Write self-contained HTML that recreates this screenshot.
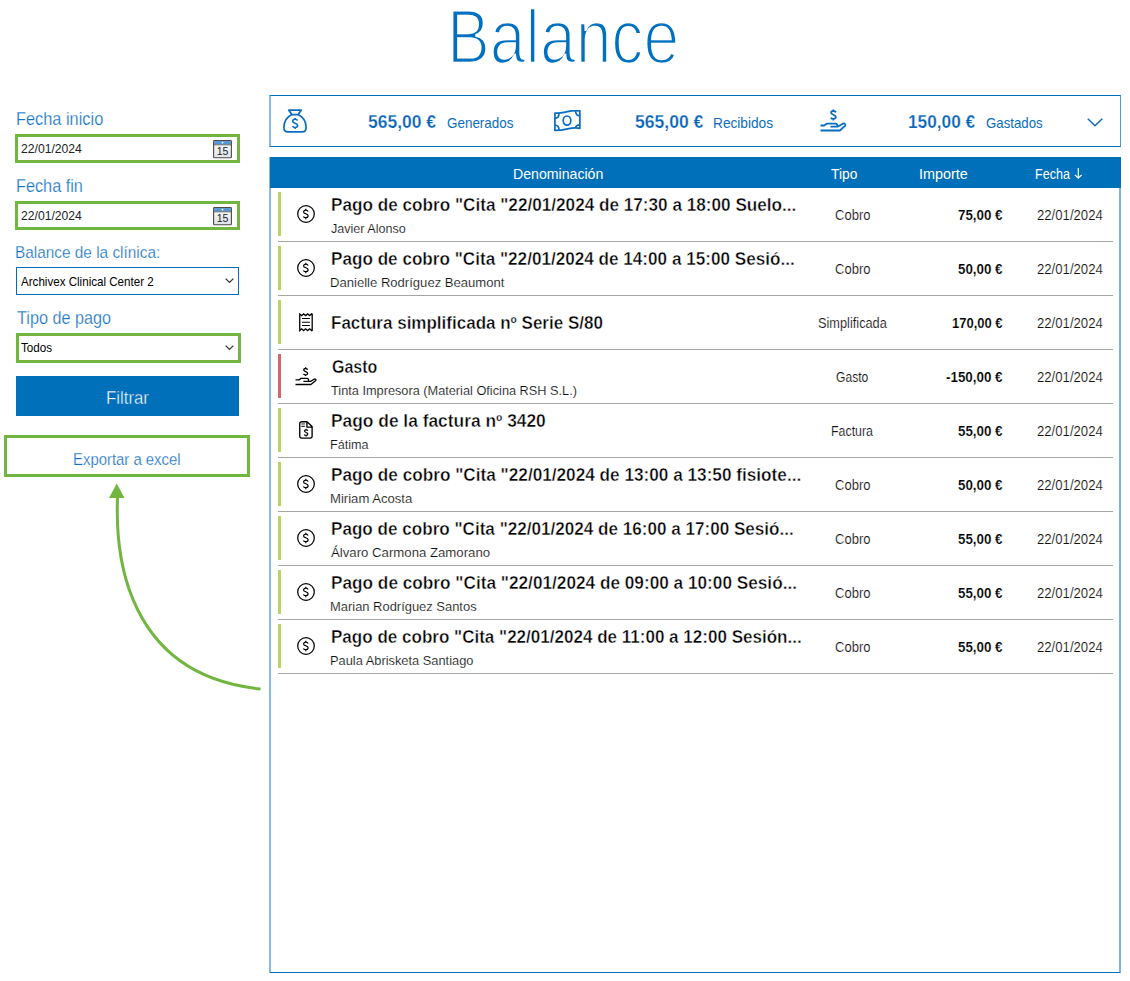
<!DOCTYPE html>
<html><head><meta charset="utf-8"><style>
html,body{margin:0;padding:0;background:#fff;}
body{width:1130px;height:981px;position:relative;overflow:hidden;font-family:"Liberation Sans",sans-serif;}
.t{position:absolute;white-space:pre;transform-origin:0 0;}
.a{position:absolute;}
</style></head><body>
<!-- left panel boxes -->
<div class="a" style="left:15px;top:133.5px;width:218.5px;height:23px;border:3px solid #72B640;"></div>
<svg class="a" style="left:213px;top:140px" width="19" height="19" viewBox="0 0 19 19">
<defs><linearGradient id="cg140" x1="0" y1="0" x2="0" y2="1"><stop offset="0" stop-color="#fbfbfc"/><stop offset="1" stop-color="#dfe3e8"/></linearGradient></defs>
<rect x="0.6" y="0.6" width="17.8" height="17.2" rx="0.8" fill="url(#cg140)" stroke="#4a4a4a" stroke-width="1.1"/>
<rect x="1.1" y="1.1" width="16.8" height="3.2" fill="#5596D2"/>
<line x1="1" y1="4.8" x2="18" y2="4.8" stroke="#555" stroke-width="0.9"/>
<circle cx="9.5" cy="2.6" r="0.9" fill="#fff"/>
<text x="9.6" y="15.3" font-family="Liberation Sans" font-size="10.5" text-anchor="middle" fill="#222">15</text>
</svg>
<div class="a" style="left:15px;top:201px;width:218.5px;height:23.3px;border:3px solid #72B640;"></div>
<svg class="a" style="left:213px;top:206.5px" width="19" height="19" viewBox="0 0 19 19">
<defs><linearGradient id="cg206" x1="0" y1="0" x2="0" y2="1"><stop offset="0" stop-color="#fbfbfc"/><stop offset="1" stop-color="#dfe3e8"/></linearGradient></defs>
<rect x="0.6" y="0.6" width="17.8" height="17.2" rx="0.8" fill="url(#cg206)" stroke="#4a4a4a" stroke-width="1.1"/>
<rect x="1.1" y="1.1" width="16.8" height="3.2" fill="#5596D2"/>
<line x1="1" y1="4.8" x2="18" y2="4.8" stroke="#555" stroke-width="0.9"/>
<circle cx="9.5" cy="2.6" r="0.9" fill="#fff"/>
<text x="9.6" y="15.3" font-family="Liberation Sans" font-size="10.5" text-anchor="middle" fill="#222">15</text>
</svg>
<div class="a" style="left:16px;top:267px;width:220.7px;height:26px;border:1px solid #0070BB;"></div>
<svg class="a" style="left:224.6px;top:278px" width="9" height="5" viewBox="0 0 9 5"><polyline points="0.65,0.65 4.5,4.35 8.35,0.65" fill="none" stroke="#333" stroke-width="1.3"/></svg>
<div class="a" style="left:15.5px;top:333.3px;width:219.1px;height:23.6px;border:3px solid #72B640;"></div>
<svg class="a" style="left:224.6px;top:345px" width="9" height="5" viewBox="0 0 9 5"><polyline points="0.65,0.65 4.5,4.35 8.35,0.65" fill="none" stroke="#333" stroke-width="1.3"/></svg>
<div class="a" style="left:15.5px;top:375.9px;width:223.2px;height:39.8px;background:#0070BB;"></div>
<div class="a" style="left:4.3px;top:434.5px;width:239.4px;height:36.5px;border:3px solid #72B640;"></div>
<svg class="a" style="left:0;top:0" width="300" height="720" viewBox="0 0 300 720">
<path d="M260.5 689 C104 673 117.5 512 117.5 497" fill="none" stroke="#72B640" stroke-width="3"/>
<path d="M109 498 L116.8 483.5 L124.5 498 Z" fill="#72B640"/>
</svg>
<!-- summary -->
<div class="a" style="left:269px;top:95px;width:849px;height:50px;border-top:1px solid #0070BB;border-bottom:1px solid #0070BB;border-left:2px solid #86BCE4;border-right:1px solid #4F9AD6;"></div>
<svg class="a" style="left:283.4px;top:108.9px" width="24" height="24" viewBox="0 0 24 24"><path d="M5.8 1.2 H18.2 L15.2 5.6 H8.8 Z" fill="none" stroke="#0A6DC0" stroke-width="1.7" stroke-linejoin="round"/><path d="M8.8 5.6 C4 8 0.9 13 0.9 18.5 C0.9 21.3 2.3 22.9 4.8 22.9 H19.2 C21.7 22.9 23.1 21.3 23.1 18.5 C23.1 13 20 8 15.2 5.6" fill="none" stroke="#0A6DC0" stroke-width="1.7"/><path d="M14.6 11.5 C14.1 10.7 13.2 10.3 12.1 10.3 C10.7 10.3 9.7 11 9.7 12.2 C9.7 13.4 10.9 13.9 12.1 14.2 C13.4 14.6 14.6 15.1 14.6 16.5 C14.6 17.7 13.6 18.5 12.1 18.5 C10.9 18.5 9.9 18 9.5 17.2 M12.1 9 V10.3 M12.1 18.5 V19.9" fill="none" stroke="#0A6DC0" stroke-width="1.6"/></svg>
<svg class="a" style="left:553.5px;top:110px" width="27" height="21.5" viewBox="0 0 27 21.5"><path d="M0.9 3.2 C5 3.4 9 2.6 13.5 1.6 C18 0.6 21.5 0.3 25.9 0.9 V18.3 C21.5 17.6 18 17.9 13.5 18.9 C9 19.9 5 20.6 0.9 20.4 Z" fill="none" stroke="#0A6DC0" stroke-width="1.7" stroke-linejoin="round"/><ellipse cx="13" cy="10.6" rx="3.8" ry="4.6" fill="none" stroke="#0A6DC0" stroke-width="1.7"/><path d="M0.9 8.3 C3.5 8.3 5 6.3 5 3.2 M25.9 6 C23.4 6 21.6 4 21.6 0.6 M0.9 15 C3.5 15 5 17 5 20.4 M25.9 14.8 C23.4 14.8 21.6 16.3 21.6 17.9" fill="none" stroke="#0A6DC0" stroke-width="1.7"/></svg>
<svg class="a" style="left:820px;top:109px" width="27" height="23" viewBox="0 0 27 23"><path d="M13.3 0.6 V2 M16 3.2 C15.5 2.4 14.6 2 13.4 2 C12 2 11.1 2.7 11.1 3.8 C11.1 5 12.3 5.4 13.4 5.8 C14.7 6.2 15.8 6.6 15.8 8 C15.8 9.1 14.8 9.9 13.3 9.9 C12.2 9.9 11.3 9.4 10.9 8.7 M13.3 9.9 V11.4" fill="none" stroke="#0A6DC0" stroke-width="1.8"/><path d="M0.5 16.5 H4.2 L7 14.6 H15.5 C17 14.6 17.6 15.8 17.2 17.1 M10.4 17.6 H18 L22.8 14.7 C24.7 13.9 26 15.6 25 16.9 L19.9 21.5 H0.5" fill="none" stroke="#0A6DC0" stroke-width="1.8" stroke-linejoin="round"/></svg>
<svg class="a" style="left:1087px;top:118.3px" width="16" height="8.5" viewBox="0 0 16 8.5"><polyline points="0.75,0.75 8.0,7.75 15.25,0.75" fill="none" stroke="#0A6DC0" stroke-width="1.5"/></svg>
<!-- table -->
<div class="a" style="left:269px;top:157px;width:848px;height:815px;border-left:2px solid #86BCE4;border-right:2px solid #7DB5E0;border-bottom:1px solid #0070BB;"></div>
<div class="a" style="left:269.5px;top:157px;width:851px;height:31px;background:#0070BB;"></div>
<svg class="a" style="left:1073px;top:167px" width="11" height="13" viewBox="0 0 11 13"><path d="M5.3 1 V11 M1.9 7.8 L5.3 11.2 L8.7 7.8" fill="none" stroke="#fff" stroke-width="1.2"/></svg>
<div class="a" style="left:278px;top:192px;width:3px;height:44px;background:#B6D65F"></div><div class="a" style="left:278px;top:241px;width:835px;height:1px;background:#A6A6A6"></div><svg class="a" style="left:297px;top:205px" width="18" height="18" viewBox="0 0 18 18"><circle cx="9" cy="9" r="8.3" fill="none" stroke="#000" stroke-width="1.25"/><path d="M11.1 6.4 C10.7 5.6 9.9 5.2 8.8 5.2 C7.5 5.2 6.6 5.9 6.6 6.9 C6.6 8 7.7 8.4 8.8 8.7 C10 9.1 11.1 9.5 11.1 10.8 C11.1 11.9 10.2 12.7 8.8 12.7 C7.7 12.7 6.8 12.2 6.4 11.5 M8.8 3.7 V5.2 M8.8 12.7 V14.3" fill="none" stroke="#000" stroke-width="1.2"/></svg><div class="a" style="left:278px;top:246px;width:3px;height:44px;background:#B6D65F"></div><div class="a" style="left:278px;top:295px;width:835px;height:1px;background:#A6A6A6"></div><svg class="a" style="left:297px;top:259px" width="18" height="18" viewBox="0 0 18 18"><circle cx="9" cy="9" r="8.3" fill="none" stroke="#000" stroke-width="1.25"/><path d="M11.1 6.4 C10.7 5.6 9.9 5.2 8.8 5.2 C7.5 5.2 6.6 5.9 6.6 6.9 C6.6 8 7.7 8.4 8.8 8.7 C10 9.1 11.1 9.5 11.1 10.8 C11.1 11.9 10.2 12.7 8.8 12.7 C7.7 12.7 6.8 12.2 6.4 11.5 M8.8 3.7 V5.2 M8.8 12.7 V14.3" fill="none" stroke="#000" stroke-width="1.2"/></svg><div class="a" style="left:278px;top:300px;width:3px;height:44px;background:#B6D65F"></div><div class="a" style="left:278px;top:349px;width:835px;height:1px;background:#A6A6A6"></div><svg class="a" style="left:299px;top:313px" width="14" height="19" viewBox="0 0 14 19"><path d="M0.75 0.9 L2.65 2.6 L4.65 0.9 L6.65 2.6 L8.65 0.9 L10.65 2.6 L12.65 0.9 L13.2 1.2 V17.3 L12.65 17.6 L10.65 15.8 L8.65 17.6 L6.65 15.8 L4.65 17.6 L2.65 15.8 L0.75 17.6 Z" fill="none" stroke="#000" stroke-width="1.3" stroke-linejoin="miter"/><path d="M3 5.5 H10.8 M3 9.2 H10.8 M3 12.5 H10.8" stroke="#000" stroke-width="1.1"/></svg><div class="a" style="left:278px;top:354px;width:3px;height:44px;background:#D9646C"></div><div class="a" style="left:278px;top:403px;width:835px;height:1px;background:#A6A6A6"></div><svg class="a" style="left:295px;top:367px" width="22" height="19" viewBox="0 0 22 19"><path d="M12.6 2.7 C12.3 1.9 11.6 1.5 10.6 1.5 C9.5 1.5 8.7 2.1 8.7 3.1 C8.7 4.1 9.6 4.4 10.6 4.7 C11.6 5 12.6 5.4 12.6 6.4 C12.6 7.3 11.8 7.9 10.6 7.9 C9.6 7.9 8.9 7.5 8.5 6.9 M10.6 0.2 V1.5 M10.6 7.9 V9.1" fill="none" stroke="#000" stroke-width="1.3"/><path d="M0.5 12.9 H4.1 L5.8 11.4 H12.2 C13.1 11.4 13.6 12.3 13.6 13.9 M8.4 14.4 H15.5 L19.1 12.2 C20.1 11.6 21.5 12.4 20.8 13.4 L15.9 17.5 H0.5" fill="none" stroke="#000" stroke-width="1.3" stroke-linejoin="round"/></svg><div class="a" style="left:278px;top:408px;width:3px;height:44px;background:#B6D65F"></div><div class="a" style="left:278px;top:457px;width:835px;height:1px;background:#A6A6A6"></div><svg class="a" style="left:299px;top:421px" width="14" height="18" viewBox="0 0 14 18"><path d="M8 0.75 H2.6 C1.6 0.75 0.75 1.6 0.75 2.6 V15.3 C0.75 16.3 1.6 17.1 2.6 17.1 H11.2 C12.2 17.1 13.1 16.3 13.1 15.3 V5.6 Z M7.9 0.9 V6.1 H13" fill="none" stroke="#000" stroke-width="1.35" stroke-linejoin="round"/><rect x="2.3" y="2" width="3.6" height="1.8" fill="#888"/><path d="M2.3 5.3 H5.9" stroke="#000" stroke-width="1"/><path d="M8.8 9.6 C8.5 9.1 8 8.8 7.1 8.8 C6.2 8.8 5.5 9.3 5.5 10.1 C5.5 10.9 6.3 11.2 7.1 11.5 C8 11.8 8.8 12.1 8.8 13 C8.8 13.8 8.1 14.3 7.1 14.3 C6.3 14.3 5.6 14 5.3 13.4 M7.1 7.8 V8.8 M7.1 14.3 V15.6" fill="none" stroke="#000" stroke-width="1.2"/></svg><div class="a" style="left:278px;top:462px;width:3px;height:44px;background:#B6D65F"></div><div class="a" style="left:278px;top:511px;width:835px;height:1px;background:#A6A6A6"></div><svg class="a" style="left:297px;top:475px" width="18" height="18" viewBox="0 0 18 18"><circle cx="9" cy="9" r="8.3" fill="none" stroke="#000" stroke-width="1.25"/><path d="M11.1 6.4 C10.7 5.6 9.9 5.2 8.8 5.2 C7.5 5.2 6.6 5.9 6.6 6.9 C6.6 8 7.7 8.4 8.8 8.7 C10 9.1 11.1 9.5 11.1 10.8 C11.1 11.9 10.2 12.7 8.8 12.7 C7.7 12.7 6.8 12.2 6.4 11.5 M8.8 3.7 V5.2 M8.8 12.7 V14.3" fill="none" stroke="#000" stroke-width="1.2"/></svg><div class="a" style="left:278px;top:516px;width:3px;height:44px;background:#B6D65F"></div><div class="a" style="left:278px;top:565px;width:835px;height:1px;background:#A6A6A6"></div><svg class="a" style="left:297px;top:529px" width="18" height="18" viewBox="0 0 18 18"><circle cx="9" cy="9" r="8.3" fill="none" stroke="#000" stroke-width="1.25"/><path d="M11.1 6.4 C10.7 5.6 9.9 5.2 8.8 5.2 C7.5 5.2 6.6 5.9 6.6 6.9 C6.6 8 7.7 8.4 8.8 8.7 C10 9.1 11.1 9.5 11.1 10.8 C11.1 11.9 10.2 12.7 8.8 12.7 C7.7 12.7 6.8 12.2 6.4 11.5 M8.8 3.7 V5.2 M8.8 12.7 V14.3" fill="none" stroke="#000" stroke-width="1.2"/></svg><div class="a" style="left:278px;top:570px;width:3px;height:44px;background:#B6D65F"></div><div class="a" style="left:278px;top:619px;width:835px;height:1px;background:#A6A6A6"></div><svg class="a" style="left:297px;top:583px" width="18" height="18" viewBox="0 0 18 18"><circle cx="9" cy="9" r="8.3" fill="none" stroke="#000" stroke-width="1.25"/><path d="M11.1 6.4 C10.7 5.6 9.9 5.2 8.8 5.2 C7.5 5.2 6.6 5.9 6.6 6.9 C6.6 8 7.7 8.4 8.8 8.7 C10 9.1 11.1 9.5 11.1 10.8 C11.1 11.9 10.2 12.7 8.8 12.7 C7.7 12.7 6.8 12.2 6.4 11.5 M8.8 3.7 V5.2 M8.8 12.7 V14.3" fill="none" stroke="#000" stroke-width="1.2"/></svg><div class="a" style="left:278px;top:624px;width:3px;height:44px;background:#B6D65F"></div><div class="a" style="left:278px;top:673px;width:835px;height:1px;background:#A6A6A6"></div><svg class="a" style="left:297px;top:637px" width="18" height="18" viewBox="0 0 18 18"><circle cx="9" cy="9" r="8.3" fill="none" stroke="#000" stroke-width="1.25"/><path d="M11.1 6.4 C10.7 5.6 9.9 5.2 8.8 5.2 C7.5 5.2 6.6 5.9 6.6 6.9 C6.6 8 7.7 8.4 8.8 8.7 C10 9.1 11.1 9.5 11.1 10.8 C11.1 11.9 10.2 12.7 8.8 12.7 C7.7 12.7 6.8 12.2 6.4 11.5 M8.8 3.7 V5.2 M8.8 12.7 V14.3" fill="none" stroke="#000" stroke-width="1.2"/></svg>
<div class="t" style="left:446.83px;top:-1.00px;font-size:76px;line-height:76px;font-weight:400;color:#0070C0;transform:scaleX(0.8456);-webkit-text-stroke:2.6px #fff;">Balance</div>
<div class="t" style="left:16.02px;top:110.00px;font-size:18.5px;line-height:18.5px;font-weight:400;color:#1272C4;transform:scaleX(0.8837);-webkit-text-stroke:0.25px #fff;">Fecha inicio</div>
<div class="t" style="left:20.70px;top:143.00px;font-size:12.4px;line-height:12.4px;font-weight:400;color:#222;transform:scaleX(0.9819);">22/01/2024</div>
<div class="t" style="left:16.10px;top:177.00px;font-size:18px;line-height:18px;font-weight:400;color:#1272C4;transform:scaleX(0.9038);-webkit-text-stroke:0.25px #fff;">Fecha fin</div>
<div class="t" style="left:20.70px;top:210.00px;font-size:12.4px;line-height:12.4px;font-weight:400;color:#222;transform:scaleX(0.9819);">22/01/2024</div>
<div class="t" style="left:15.48px;top:245.00px;font-size:16.8px;line-height:16.8px;font-weight:400;color:#1272C4;transform:scaleX(0.9157);-webkit-text-stroke:0.25px #fff;">Balance de la clínica:</div>
<div class="t" style="left:21.00px;top:276.00px;font-size:12.4px;line-height:12.4px;font-weight:400;color:#000;transform:scaleX(0.9354);">Archivex Clinical Center 2</div>
<div class="t" style="left:17.00px;top:310.00px;font-size:17.6px;line-height:17.6px;font-weight:400;color:#1272C4;transform:scaleX(0.9220);-webkit-text-stroke:0.25px #fff;">Tipo de pago</div>
<div class="t" style="left:20.90px;top:342.00px;font-size:12.2px;line-height:12.2px;font-weight:400;color:#000;transform:scaleX(0.9560);">Todos</div>
<div class="t" style="left:105.89px;top:389.00px;font-size:18.5px;line-height:18.5px;font-weight:400;color:#fff;transform:scaleX(0.9087);-webkit-text-stroke:0.4px #0070BB;">Filtrar</div>
<div class="t" style="left:73.44px;top:451.00px;font-size:17.4px;line-height:17.4px;font-weight:400;color:#1272C4;transform:scaleX(0.8563);-webkit-text-stroke:0.25px #fff;">Exportar a excel</div>
<div class="t" style="left:368.10px;top:113.00px;font-size:18.5px;line-height:18.5px;font-weight:700;color:#0664B9;transform:scaleX(0.9439);-webkit-text-stroke:0.25px #fff;">565,00 €</div>
<div class="t" style="left:447.30px;top:115.00px;font-size:15px;line-height:15px;font-weight:400;color:#0A6DC0;transform:scaleX(0.8953);">Generados</div>
<div class="t" style="left:635.00px;top:113.00px;font-size:18.5px;line-height:18.5px;font-weight:700;color:#0664B9;transform:scaleX(0.9481);-webkit-text-stroke:0.25px #fff;">565,00 €</div>
<div class="t" style="left:713.09px;top:115.00px;font-size:15px;line-height:15px;font-weight:400;color:#0A6DC0;transform:scaleX(0.9120);">Recibidos</div>
<div class="t" style="left:907.87px;top:113.00px;font-size:18.5px;line-height:18.5px;font-weight:700;color:#0664B9;transform:scaleX(0.9318);-webkit-text-stroke:0.25px #fff;">150,00 €</div>
<div class="t" style="left:985.80px;top:115.00px;font-size:15px;line-height:15px;font-weight:400;color:#0A6DC0;transform:scaleX(0.8822);">Gastados</div>
<div class="t" style="left:513.29px;top:167.00px;font-size:14px;line-height:14px;font-weight:400;color:#fff;transform:scaleX(1.0090);">Denominación</div>
<div class="t" style="left:830.50px;top:167.00px;font-size:14px;line-height:14px;font-weight:400;color:#fff;transform:scaleX(0.9841);">Tipo</div>
<div class="t" style="left:918.77px;top:167.00px;font-size:14px;line-height:14px;font-weight:400;color:#fff;transform:scaleX(1.0284);">Importe</div>
<div class="t" style="left:1034.90px;top:167.00px;font-size:14px;line-height:14px;font-weight:400;color:#fff;transform:scaleX(0.8971);">Fecha</div>
<div class="t" style="left:330.75px;top:196.00px;font-size:18px;line-height:18px;font-weight:700;color:#000;transform:scaleX(0.9531);-webkit-text-stroke:0.4px #fff;">Pago de cobro "Cita "22/01/2024 de 17:30 a 18:00 Suelo...</div>
<div class="t" style="left:331.00px;top:222.00px;font-size:13.5px;line-height:13.5px;font-weight:400;color:#111;transform:scaleX(0.9313);-webkit-text-stroke:0.15px #fff;">Javier Alonso</div>
<div class="t" style="left:834.65px;top:208.00px;font-size:14px;line-height:14px;font-weight:400;color:#111;transform:scaleX(0.9310);-webkit-text-stroke:0.15px #fff;">Cobro</div>
<div class="t" style="left:957.80px;top:208.00px;font-size:14px;line-height:14px;font-weight:700;color:#000;transform:scaleX(0.9526);-webkit-text-stroke:0.15px #fff;">75,00 €</div>
<div class="t" style="left:1036.50px;top:208.00px;font-size:14px;line-height:14px;font-weight:400;color:#111;transform:scaleX(0.9391);-webkit-text-stroke:0.15px #fff;">22/01/2024</div>
<div class="t" style="left:330.75px;top:250.00px;font-size:18px;line-height:18px;font-weight:700;color:#000;transform:scaleX(0.9516);-webkit-text-stroke:0.4px #fff;">Pago de cobro "Cita "22/01/2024 de 14:00 a 15:00 Sesió...</div>
<div class="t" style="left:330.03px;top:276.00px;font-size:13.5px;line-height:13.5px;font-weight:400;color:#111;transform:scaleX(0.9685);-webkit-text-stroke:0.15px #fff;">Danielle Rodríguez Beaumont</div>
<div class="t" style="left:834.65px;top:262.00px;font-size:14px;line-height:14px;font-weight:400;color:#111;transform:scaleX(0.9310);-webkit-text-stroke:0.15px #fff;">Cobro</div>
<div class="t" style="left:957.80px;top:262.00px;font-size:14px;line-height:14px;font-weight:700;color:#000;transform:scaleX(0.9526);-webkit-text-stroke:0.15px #fff;">50,00 €</div>
<div class="t" style="left:1036.50px;top:262.00px;font-size:14px;line-height:14px;font-weight:400;color:#111;transform:scaleX(0.9391);-webkit-text-stroke:0.15px #fff;">22/01/2024</div>
<div class="t" style="left:330.76px;top:314.00px;font-size:18px;line-height:18px;font-weight:700;color:#000;transform:scaleX(0.9450);-webkit-text-stroke:0.4px #fff;">Factura simplificada nº Serie S/80</div>
<div class="t" style="left:818.00px;top:316.00px;font-size:14px;line-height:14px;font-weight:400;color:#111;transform:scaleX(0.9116);-webkit-text-stroke:0.15px #fff;">Simplificada</div>
<div class="t" style="left:951.80px;top:316.00px;font-size:14px;line-height:14px;font-weight:700;color:#000;transform:scaleX(0.9267);-webkit-text-stroke:0.15px #fff;">170,00 €</div>
<div class="t" style="left:1036.50px;top:316.00px;font-size:14px;line-height:14px;font-weight:400;color:#111;transform:scaleX(0.9391);-webkit-text-stroke:0.15px #fff;">22/01/2024</div>
<div class="t" style="left:331.70px;top:358.00px;font-size:18px;line-height:18px;font-weight:700;color:#000;transform:scaleX(0.8879);-webkit-text-stroke:0.4px #fff;">Gasto</div>
<div class="t" style="left:331.00px;top:384.00px;font-size:13.5px;line-height:13.5px;font-weight:400;color:#111;transform:scaleX(0.9439);-webkit-text-stroke:0.15px #fff;">Tinta Impresora (Material Oficina RSH S.L.)</div>
<div class="t" style="left:836.25px;top:370.00px;font-size:14px;line-height:14px;font-weight:400;color:#111;transform:scaleX(0.8652);-webkit-text-stroke:0.15px #fff;">Gasto</div>
<div class="t" style="left:945.80px;top:370.00px;font-size:14px;line-height:14px;font-weight:700;color:#000;transform:scaleX(0.9550);-webkit-text-stroke:0.15px #fff;">-150,00 €</div>
<div class="t" style="left:1036.50px;top:370.00px;font-size:14px;line-height:14px;font-weight:400;color:#111;transform:scaleX(0.9391);-webkit-text-stroke:0.15px #fff;">22/01/2024</div>
<div class="t" style="left:330.74px;top:412.00px;font-size:18px;line-height:18px;font-weight:700;color:#000;transform:scaleX(0.9646);-webkit-text-stroke:0.4px #fff;">Pago de la factura nº 3420</div>
<div class="t" style="left:330.07px;top:438.00px;font-size:13.5px;line-height:13.5px;font-weight:400;color:#111;transform:scaleX(0.9350);-webkit-text-stroke:0.15px #fff;">Fátima</div>
<div class="t" style="left:830.97px;top:424.00px;font-size:14px;line-height:14px;font-weight:400;color:#111;transform:scaleX(0.8848);-webkit-text-stroke:0.15px #fff;">Factura</div>
<div class="t" style="left:957.80px;top:424.00px;font-size:14px;line-height:14px;font-weight:700;color:#000;transform:scaleX(0.9526);-webkit-text-stroke:0.15px #fff;">55,00 €</div>
<div class="t" style="left:1036.50px;top:424.00px;font-size:14px;line-height:14px;font-weight:400;color:#111;transform:scaleX(0.9391);-webkit-text-stroke:0.15px #fff;">22/01/2024</div>
<div class="t" style="left:330.74px;top:466.00px;font-size:18px;line-height:18px;font-weight:700;color:#000;transform:scaleX(0.9552);-webkit-text-stroke:0.4px #fff;">Pago de cobro "Cita "22/01/2024 de 13:00 a 13:50 fisiote...</div>
<div class="t" style="left:330.03px;top:492.00px;font-size:13.5px;line-height:13.5px;font-weight:400;color:#111;transform:scaleX(0.9705);-webkit-text-stroke:0.15px #fff;">Miriam Acosta</div>
<div class="t" style="left:834.65px;top:478.00px;font-size:14px;line-height:14px;font-weight:400;color:#111;transform:scaleX(0.9310);-webkit-text-stroke:0.15px #fff;">Cobro</div>
<div class="t" style="left:957.80px;top:478.00px;font-size:14px;line-height:14px;font-weight:700;color:#000;transform:scaleX(0.9526);-webkit-text-stroke:0.15px #fff;">50,00 €</div>
<div class="t" style="left:1036.50px;top:478.00px;font-size:14px;line-height:14px;font-weight:400;color:#111;transform:scaleX(0.9391);-webkit-text-stroke:0.15px #fff;">22/01/2024</div>
<div class="t" style="left:330.75px;top:520.00px;font-size:18px;line-height:18px;font-weight:700;color:#000;transform:scaleX(0.9497);-webkit-text-stroke:0.4px #fff;">Pago de cobro "Cita "22/01/2024 de 16:00 a 17:00 Sesió...</div>
<div class="t" style="left:331.00px;top:546.00px;font-size:13.5px;line-height:13.5px;font-weight:400;color:#111;transform:scaleX(0.9771);-webkit-text-stroke:0.15px #fff;">Álvaro Carmona Zamorano</div>
<div class="t" style="left:834.65px;top:532.00px;font-size:14px;line-height:14px;font-weight:400;color:#111;transform:scaleX(0.9310);-webkit-text-stroke:0.15px #fff;">Cobro</div>
<div class="t" style="left:957.80px;top:532.00px;font-size:14px;line-height:14px;font-weight:700;color:#000;transform:scaleX(0.9526);-webkit-text-stroke:0.15px #fff;">55,00 €</div>
<div class="t" style="left:1036.50px;top:532.00px;font-size:14px;line-height:14px;font-weight:400;color:#111;transform:scaleX(0.9391);-webkit-text-stroke:0.15px #fff;">22/01/2024</div>
<div class="t" style="left:330.74px;top:574.00px;font-size:18px;line-height:18px;font-weight:700;color:#000;transform:scaleX(0.9563);-webkit-text-stroke:0.4px #fff;">Pago de cobro "Cita "22/01/2024 de 09:00 a 10:00 Sesió...</div>
<div class="t" style="left:330.04px;top:600.00px;font-size:13.5px;line-height:13.5px;font-weight:400;color:#111;transform:scaleX(0.9578);-webkit-text-stroke:0.15px #fff;">Marian Rodríguez Santos</div>
<div class="t" style="left:834.65px;top:586.00px;font-size:14px;line-height:14px;font-weight:400;color:#111;transform:scaleX(0.9310);-webkit-text-stroke:0.15px #fff;">Cobro</div>
<div class="t" style="left:957.80px;top:586.00px;font-size:14px;line-height:14px;font-weight:700;color:#000;transform:scaleX(0.9526);-webkit-text-stroke:0.15px #fff;">55,00 €</div>
<div class="t" style="left:1036.50px;top:586.00px;font-size:14px;line-height:14px;font-weight:400;color:#111;transform:scaleX(0.9391);-webkit-text-stroke:0.15px #fff;">22/01/2024</div>
<div class="t" style="left:330.75px;top:628.00px;font-size:18px;line-height:18px;font-weight:700;color:#000;transform:scaleX(0.9465);-webkit-text-stroke:0.4px #fff;">Pago de cobro "Cita "22/01/2024 de 11:00 a 12:00 Sesión...</div>
<div class="t" style="left:330.05px;top:654.00px;font-size:13.5px;line-height:13.5px;font-weight:400;color:#111;transform:scaleX(0.9508);-webkit-text-stroke:0.15px #fff;">Paula Abrisketa Santiago</div>
<div class="t" style="left:834.65px;top:640.00px;font-size:14px;line-height:14px;font-weight:400;color:#111;transform:scaleX(0.9310);-webkit-text-stroke:0.15px #fff;">Cobro</div>
<div class="t" style="left:957.80px;top:640.00px;font-size:14px;line-height:14px;font-weight:700;color:#000;transform:scaleX(0.9526);-webkit-text-stroke:0.15px #fff;">55,00 €</div>
<div class="t" style="left:1036.50px;top:640.00px;font-size:14px;line-height:14px;font-weight:400;color:#111;transform:scaleX(0.9391);-webkit-text-stroke:0.15px #fff;">22/01/2024</div>
</body></html>
